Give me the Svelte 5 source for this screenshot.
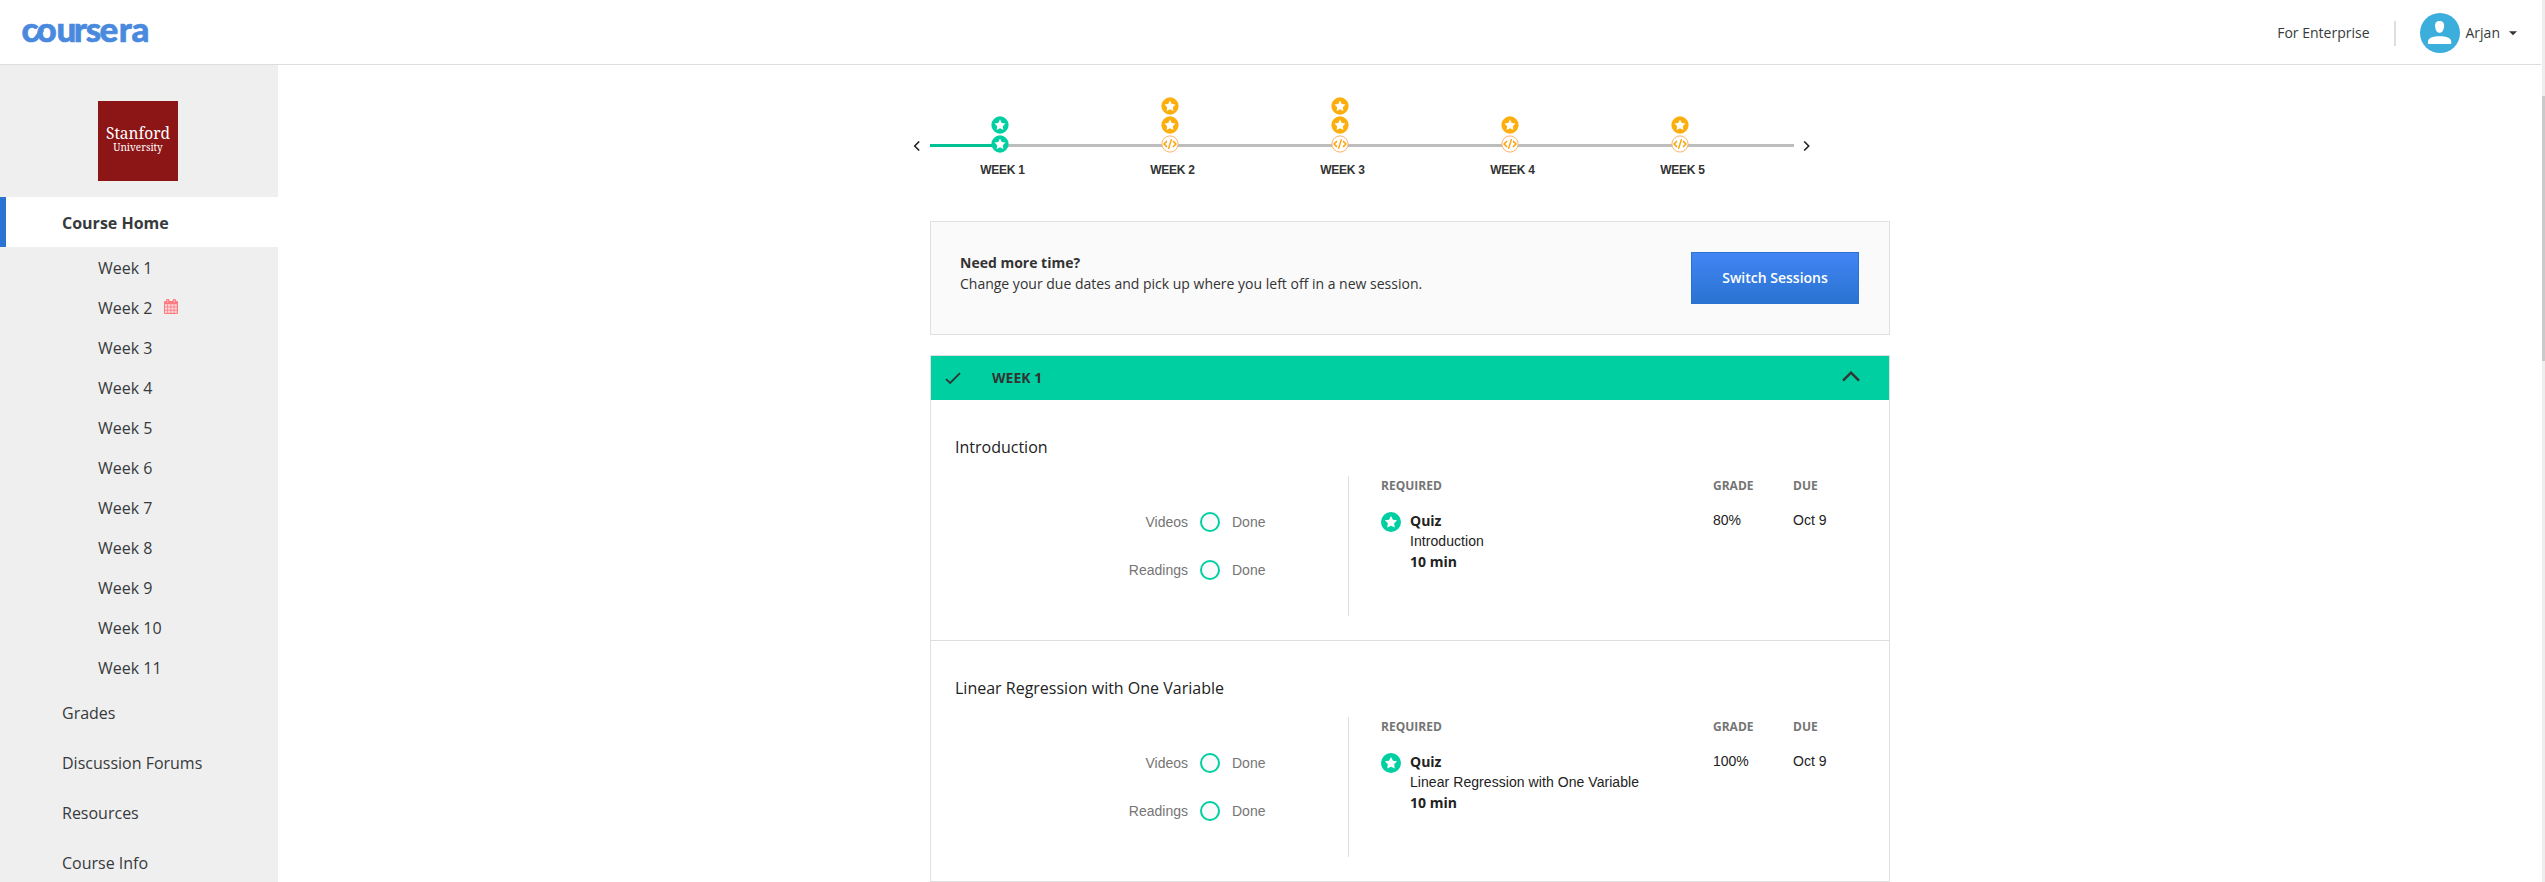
<script>
  const weeks = Array.from({ length: 11 }, (_, i) => i + 1);
  const links = ['Grades', 'Discussion Forums', 'Resources', 'Course Info'];
  const timeline = [
    { n: 1, marks: ['done', 'done'] },
    { n: 2, marks: ['star', 'star', 'code'] },
    { n: 3, marks: ['star', 'star', 'code'] },
    { n: 4, marks: ['star', 'code'] },
    { n: 5, marks: ['star', 'code'] }
  ];
  const modules = [
    { title: 'Introduction', grade: '80%', due: 'Oct 9' },
    { title: 'Linear Regression with One Variable', grade: '100%', due: 'Oct 9' }
  ];
  const starPath = 'M10 3.9 L11.95 7.65 L16.1 8.35 L13.15 11.35 L13.75 15.5 L10 13.65 L6.25 15.5 L6.85 11.35 L3.9 8.35 L8.05 7.65 Z';
</script>

<div class="page">
  <header>
    <svg class="brand" width="130" height="30" viewBox="0 0 130 30" aria-label="coursera">
      <text y="24.4" x="-0.5 14.6 34.6 51.8 63.8 77.4 96.8 109.4">coursera</text>
      <path d="M13 21.5 L20.5 11.5" />
    </svg>
    <div class="account">
      <span class="enterprise">For Enterprise</span>
      <span class="sep"></span>
      <svg width="40" height="40" viewBox="0 0 40 40">
        <circle cx="20" cy="20" r="20" fill="#3caedb" />
        <path d="M19.6 8 C23 8 24.3 10.2 24.1 13.2 C23.9 16.8 22.2 19.8 19.6 19.8 C17 19.8 15.3 16.8 15.1 13.2 C14.9 10.2 16.2 8 19.6 8 Z" fill="#fff" />
        <path d="M8 31 V28.4 C8 25.2 13 23.3 19.6 23.3 C26.2 23.3 31.2 25.2 31.2 28.4 V31 Z" fill="#fff" />
      </svg>
      <span class="name">Arjan</span>
      <svg class="caret" width="8" height="5" viewBox="0 0 8 5"><path d="M0 0.3 H8 L4 4.3 Z" fill="#333" /></svg>
    </div>
  </header>

  <div class="body">
    <nav>
      <div class="school">
        <span class="s1">Stanford</span>
        <span class="s2">University</span>
      </div>
      <div class="item active">Course Home</div>
      {#each weeks as w}
        <div class="week">
          <span>Week {w}</span>
          {#if w === 2}
            <svg width="14" height="15" viewBox="0 0 14 15">
              <rect x="0" y="2" width="14" height="13" rx="1.2" fill="#ff7a7f" />
              <rect x="2" y="0" width="3.4" height="4.4" rx="1.3" fill="#ff7a7f" />
              <rect x="8.6" y="0" width="3.4" height="4.4" rx="1.3" fill="#ff7a7f" />
              <path d="M3.7 1 V3.4 M10.3 1 V3.4" stroke="#ffd0d0" stroke-width="0.9" />
              {#each [5.2, 8.4, 11.6] as y}
                {#each [1, 4.1, 7.3, 10.5] as x}
                  <rect {x} {y} width="2.3" height="2.3" fill="#fbdcdc" />
                {/each}
              {/each}
            </svg>
          {/if}
        </div>
      {/each}
      {#each links as l}
        <div class="item">{l}</div>
      {/each}
    </nav>

    <main>
      <div class="timeline">
        <svg class="arrow" width="7" height="10" viewBox="0 0 7 10"><path d="M6.2 0.5 L1.7 5 L6.2 9.5" /></svg>
        <div class="track">
          <div class="line"></div>
          {#each timeline as t}
            <div class="stop">
              <div class="marks">
                {#each t.marks as m}
                  <svg width="18" height="18" viewBox="0 0 20 20">
                    {#if m === 'code'}
                      <circle cx="10" cy="10" r="9" fill="#fff" stroke="#fbb267" stroke-width="1.1" />
                      <path d="M6.6 6.8 L3.4 10 L6.6 13.2 M13.4 6.8 L16.6 10 L13.4 13.2 M11.7 4.6 L8.3 15.4" fill="none" stroke="#faa40a" stroke-width="1.6" />
                    {:else}
                      <circle cx="10" cy="10" r="9.6" fill={m === 'done' ? '#00cfa1' : '#fcae0c'} />
                      <path d={starPath} fill="#fff" />
                    {/if}
                  </svg>
                {/each}
              </div>
              <div class="label">WEEK {t.n}</div>
            </div>
          {/each}
        </div>
        <svg class="arrow" width="7" height="10" viewBox="0 0 7 10"><path d="M1.2 0.5 L5.7 5 L1.2 9.5" /></svg>
      </div>

      <section class="notice">
        <div>
          <div class="strong">Need more time?</div>
          <div>Change your due dates and pick up where you left off in a new session.</div>
        </div>
        <button>Switch Sessions</button>
      </section>

      <section class="panel">
        <div class="bar">
          <svg width="16" height="13" viewBox="0 0 16 13"><path d="M1 7.2 L5.2 11 L15 1.2" fill="none" stroke="#333" stroke-width="1.8" /></svg>
          <span>WEEK 1</span>
          <svg class="up" width="18" height="11" viewBox="0 0 18 11"><path d="M1 9.6 L9 1.6 L17 9.6" fill="none" stroke="#333" stroke-width="2.3" /></svg>
        </div>
        {#each modules as m}
          <div class="module">
            <h2>{m.title}</h2>
            <div class="cols">
              <div class="progress">
                {#each ['Videos', 'Readings'] as p}
                  <div class="prow"><span class="kind">{p}</span><i></i><span>Done</span></div>
                {/each}
              </div>
              <div class="required">
                <span class="th">REQUIRED</span><span class="th">GRADE</span><span class="th">DUE</span>
                <div class="quiz">
                  <svg width="20" height="20" viewBox="0 0 20 20">
                    <circle cx="10" cy="10" r="10" fill="#00cfa1" />
                    <path d={starPath} fill="#fff" />
                  </svg>
                  <div class="info">
                    <div class="b">Quiz</div>
                    <div class="t">{m.title}</div>
                    <div class="b">10 min</div>
                  </div>
                </div>
                <span class="val">{m.grade}</span><span class="val">{m.due}</span>
              </div>
            </div>
          </div>
        {/each}
      </section>
    </main>
  </div>
  <div class="scroll"><div class="thumb"></div></div>
</div>

<style>
  :global(body) { background: #fff; overflow: hidden; }
  .page { position: relative; width: 2545px; height: 882px; overflow: hidden; font: 14px/21px "Open Sans", sans-serif; color: #373a3c; }
  .page * { box-sizing: border-box; }
  header { display: flex; align-items: center; justify-content: space-between; width: 2541px; height: 65px; border-bottom: 1px solid #dedede; padding: 2px 24px 0 22px; }
  .brand { overflow: visible; }
  .brand text { font: 900 35px Lato, sans-serif; fill: #4a8ade; stroke: #4a8ade; stroke-width: 0.6; }
  .brand path { stroke: #4a8ade; stroke-width: 4; }
  .account { display: flex; align-items: center; }
  .enterprise { margin-top: -1px; }
  .sep { width: 2px; height: 25px; background: #dedede; margin: 0 24px 0 24px; }
  .name { margin: -1px 0 0 6px; }
  .caret { margin-left: 9px; }
  .body { display: flex; height: 817px; }
  nav { width: 278px; background: #efefef; flex: none; font-size: 16px; }
  .school { width: 80px; height: 80px; margin: 36px 0 16px 98px; background: #8c1515; color: #fff; display: flex; flex-direction: column; align-items: center; padding-top: 22px; }
  .s1 { font-family: "Noto Serif", "Liberation Serif", serif; font-size: 15.5px; line-height: 20px; }
  .s2 { font-family: "Noto Serif", "Liberation Serif", serif; font-size: 10px; line-height: 12px; margin-top: -2px; }
  .item { height: 50px; line-height: 48px; padding: 2px 0 0 62px; }
  .active { background: #fff; border-left: 6px solid #2a73d1; padding-left: 56px; font-weight: 700; }
  .week { display: flex; align-items: center; height: 40px; padding: 2px 0 0 98px; line-height: 38px; }
  .week svg { margin: -3px 0 0 12px; }
  main { width: 960px; margin-left: 652px; }
  .timeline { display: flex; align-items: flex-start; height: 156px; margin: 0 -17px; padding-top: 31px; }
  .arrow { flex: none; margin-top: 45px; fill: none; stroke: #222; stroke-width: 1.6; }
  .track { position: relative; display: flex; width: 864px; margin: 0 9px 0 10px; }
  .line { position: absolute; left: 0; top: 48px; width: 864px; height: 3px; background: linear-gradient(to right, #00c194 70px, #bdbdbd 70px); }
  .stop { position: relative; width: 170px; flex: none; left: -15px; display: flex; flex-direction: column; align-items: center; }
  .marks { display: flex; flex-direction: column; justify-content: flex-end; gap: 1px; height: 57px; }
  .marks svg { display: block; }
  .label { font: 700 12px/14px "Liberation Sans", sans-serif; letter-spacing: -0.25px; color: #333; margin: 10px 0 0 5px; }
  .notice { display: flex; justify-content: space-between; height: 114px; background: #fafafa; border: 1px solid #e0e0e0; padding: 30px 30px 0 29px; color: #333; }
  .strong { font-weight: 700; }
  button { width: 168px; height: 52px; border: 1px solid #2a73d1; background: linear-gradient(#4285f4, #2a73d1); color: #fff; font: 600 14px "Open Sans", sans-serif; padding: 0 0 1px; }
  .panel { margin-top: 20px; height: 527px; border: 1px solid #e0e0e0; }
  .bar { height: 44px; background: #00cfa1; display: flex; align-items: center; padding: 0 29px 0 14px; font-weight: 700; color: #333; }
  .bar span { margin: -2px 0 0 31px; }
  .bar .up { margin: -4px 0 0 auto; }
  .module { height: 240px; padding: 35px 24px 0; }
  .module + .module { height: 241px; border-top: 1px solid #dedede; }
  h2 { margin: 0; font-size: 16px; font-weight: 400; line-height: 24px; color: #222; }
  .cols { display: flex; margin-top: 17px; }
  .progress { flex: none; width: 393px; font: 14px/20px "Liberation Sans", sans-serif; color: #757575; padding-top: 36px; }
  .prow { display: flex; align-items: center; height: 20px; margin-bottom: 28px; }
  .kind { width: 233px; text-align: right; }
  .prow i { width: 20px; height: 20px; border: 2px solid #00cfa1; border-radius: 50%; background: #fafafa; margin: 0 12px 0 12px; }
  .required { flex: none; height: 140px; border-left: 1px solid #dedede; padding-left: 32px; display: grid; grid-template-columns: 332px 80px 60px; grid-template-rows: 36px auto; color: #222; }
  .th { font-size: 12px; line-height: 20px; font-weight: 700; color: #757575; }
  .quiz { display: flex; font: 14px/20px "Liberation Sans", sans-serif; }
  .quiz svg { flex: none; margin-right: 9px; }
  .info { margin-top: -2px; }
  .t { line-height: 19px; padding-top: 1px; letter-spacing: 0.06px; }
  .b { font: 700 14px/21px "Open Sans", sans-serif; }
  .val { font: 14px/17px "Liberation Sans", sans-serif; }
  .scroll { position: absolute; right: 0; top: 0; width: 3px; height: 882px; background: #eee; padding-top: 96px; }
  .thumb { height: 265px; background: #cacaca; }
</style>
